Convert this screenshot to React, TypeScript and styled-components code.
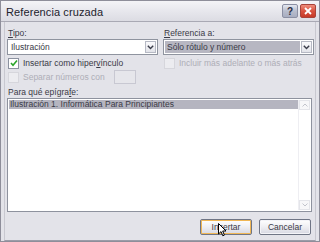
import React from "react";
import styled, { createGlobalStyle } from "styled-components";

const Global = createGlobalStyle`
  html, body { margin: 0; padding: 0; background: #e4e4ea; }
  body { font-family: "Liberation Sans", Arial, sans-serif; }
`;

const Window = styled.div`
  width: 320px;
  height: 242px;
  box-sizing: border-box;
  border: 1px solid #8e8e9a;
  background: #e3e3e9;
  display: flex;
  flex-direction: column;
  overflow: hidden;
  position: relative;
`;

const TitleBar = styled.div`
  height: 20px;
  flex: none;
  display: flex;
  align-items: center;
  padding: 0 3px 0 5px;
  background: linear-gradient(#f4f4f7, #e6e6ec 55%, #dcdce3);
  border-bottom: 1px solid #a9a9b4;
`;

const Title = styled.div`
  flex: 1;
  font-size: 11px;
  color: #22222c;
  letter-spacing: 0.1px;
  padding-top: 1px;
`;

const TitleButton = styled.div<{ $close?: boolean }>`
  width: 14px;
  height: 12px;
  margin-left: 2px;
  border-radius: 2px;
  border: 1px solid ${(p) => (p.$close ? "#a8433a" : "#8b8fa3")};
  background: ${(p) =>
    p.$close
      ? "linear-gradient(#ef8d7c, #d9523f 50%, #c63a28)"
      : "linear-gradient(#e4e7f0, #b8bdcd 50%, #a8adc0)"};
  display: flex;
  align-items: center;
  justify-content: center;
  color: ${(p) => (p.$close ? "#fff" : "#2a2c40")};
  font-size: 10px;
  font-weight: bold;
`;

const Frame = styled.div`
  flex: 1;
  margin: 0 3px 3px 3px;
  border-left: 1px solid #c8c8d0;
  border-right: 1px solid #c8c8d0;
  border-bottom: 1px solid #9c9ca8;
  padding: 6px 3px 5px 2px;
  display: flex;
  flex-direction: column;
`;

const Columns = styled.div`
  display: grid;
  grid-template-columns: 151px 151px;
  column-gap: 5px;
`;

const Col = styled.div`
  display: flex;
  flex-direction: column;
`;

const Label = styled.div<{ $disabled?: boolean }>`
  font-size: 8.5px;
  line-height: 10px;
  color: ${(p) => (p.$disabled ? "#aeaeb7" : "#3a3a46")};
  white-space: nowrap;
  padding-left: 1px;
`;

const Combo = styled.div`
  margin-top: 1px;
  height: 16px;
  box-sizing: border-box;
  border: 1px solid #8f949f;
  background: #fff;
  display: flex;
  align-items: stretch;
  padding: 1px;
`;

const ComboText = styled.div<{ $selected?: boolean }>`
  flex: 1;
  font-size: 8.5px;
  line-height: 12px;
  padding-left: 2px;
  color: #3a3a46;
  background: ${(p) => (p.$selected ? "#b7b7c2" : "transparent")};
  margin-right: 1px;
`;

const ComboButton = styled.div`
  width: 11px;
  box-sizing: border-box;
  border: 1px solid #b6b9c4;
  background: linear-gradient(#fafafc, #e2e3e9);
  display: flex;
  align-items: center;
  justify-content: center;
`;

const CheckRow = styled.div<{ $top: number }>`
  display: flex;
  align-items: center;
  margin-top: ${(p) => p.$top}px;
  height: 12px;
`;

const Box = styled.div<{ $disabled?: boolean }>`
  width: 9px;
  height: 9px;
  margin-left: 1px;
  margin-right: 3px;
  border: 1px solid ${(p) => (p.$disabled ? "#d6d6dc" : "#8c92a0")};
  background: ${(p) => (p.$disabled ? "#ececf0" : "#fff")};
  display: flex;
  align-items: center;
  justify-content: center;
`;

const SmallInput = styled.div`
  width: 20px;
  height: 12px;
  margin-left: 9px;
  border: 1px solid #c8c8d2;
  background: #e6e6eb;
`;

const ListLabel = styled(Label)`
  margin-top: 4px;
`;

const ListBox = styled.div`
  margin-top: 1px;
  height: 114px;
  box-sizing: border-box;
  border: 1px solid #8e929e;
  background: #fff;
  display: flex;
  padding: 1px;
`;

const Items = styled.div`
  flex: 1;
`;

const Item = styled.div<{ $selected?: boolean }>`
  font-size: 8.5px;
  line-height: 9px;
  padding-left: 1px;
  color: #3a3a46;
  background: ${(p) => (p.$selected ? "#b5b5c0" : "transparent")};
`;

const ScrollBar = styled.div`
  width: 11px;
  border-left: 1px solid #eeeef2;
  display: flex;
  flex-direction: column;
  justify-content: space-between;
`;

const ScrollArrow = styled.div`
  height: 10px;
  box-sizing: border-box;
  border: 1px solid #e4e5ea;
  background: #f7f7f9;
  display: flex;
  align-items: center;
  justify-content: center;
`;

const Buttons = styled.div`
  display: flex;
  justify-content: flex-end;
  gap: 7px;
  margin-top: 7px;
  padding-right: 1px;
`;

const Button = styled.div<{ $default?: boolean }>`
  width: 52px;
  height: 16px;
  box-sizing: border-box;
  border: 1px solid #6f7585;
  border-radius: 2px;
  background: linear-gradient(#ffffff, #eeeef2 50%, #d7d8e2);
  box-shadow: ${(p) =>
    p.$default ? "inset 0 0 0 1px #f0b755" : "inset 0 0 0 1px #f4f4f8"};
  display: flex;
  align-items: center;
  justify-content: center;
  font-size: 8.5px;
  color: #3a3a46;
  position: relative;
`;

const Cursor = styled.svg`
  position: absolute;
  left: 17px;
  top: 3px;
`;

const Chevron = () => (
  <svg width="7" height="5" viewBox="0 0 7 5">
    <path d="M0.8 0.8 L3.5 3.6 L6.2 0.8" fill="none" stroke="#3a3d4a" strokeWidth="1.4" />
  </svg>
);

const Arrow = ({ up }: { up?: boolean }) => (
  <svg width="6" height="4" viewBox="0 0 6 4">
    <path
      d={up ? "M0.5 3.5 L3 1 L5.5 3.5" : "M0.5 0.5 L3 3 L5.5 0.5"}
      fill="none"
      stroke="#c2c4cc"
      strokeWidth="1"
    />
  </svg>
);

export default function App() {
  return (
    <>
      <Global />
      <Window>
        <TitleBar>
          <Title>Referencia cruzada</Title>
          <TitleButton>?</TitleButton>
          <TitleButton $close>
            <svg width="8" height="8" viewBox="0 0 8 8">
              <path d="M1 1 L7 7 M7 1 L1 7" stroke="#fff" strokeWidth="1.8" />
            </svg>
          </TitleButton>
        </TitleBar>
        <Frame>
          <Columns>
            <Col>
              <Label>
                <u>T</u>ipo:
              </Label>
              <Combo>
                <ComboText>Ilustración</ComboText>
                <ComboButton>
                  <Chevron />
                </ComboButton>
              </Combo>
              <CheckRow $top={2}>
                <Box>
                  <svg width="8" height="8" viewBox="0 0 8 8">
                    <path d="M1 4 L3 6.2 L7 1.5" fill="none" stroke="#2aa52a" strokeWidth="1.6" />
                  </svg>
                </Box>
                <Label>
                  Insertar como hiper<u>v</u>ínculo
                </Label>
              </CheckRow>
              <CheckRow $top={2}>
                <Box $disabled />
                <Label $disabled>Separar números con</Label>
                <SmallInput />
              </CheckRow>
            </Col>
            <Col>
              <Label>
                <u>R</u>eferencia a:
              </Label>
              <Combo>
                <ComboText $selected>Sólo rótulo y número</ComboText>
                <ComboButton>
                  <Chevron />
                </ComboButton>
              </Combo>
              <CheckRow $top={2}>
                <Box $disabled />
                <Label $disabled>Incluir más adelante o más atrás</Label>
              </CheckRow>
            </Col>
          </Columns>
          <ListLabel>
            Para qué epígra<u>f</u>e:
          </ListLabel>
          <ListBox>
            <Items>
              <Item $selected>Ilustración 1. Informática Para Principiantes</Item>
            </Items>
            <ScrollBar>
              <ScrollArrow>
                <Arrow up />
              </ScrollArrow>
              <ScrollArrow>
                <Arrow />
              </ScrollArrow>
            </ScrollBar>
          </ListBox>
          <Buttons>
            <Button $default>
              Insertar
              <Cursor width="9" height="14" viewBox="0 0 9 14">
                <path d="M0.5 0.5 L0.5 11 L3 8.6 L4.8 12.8 L6.4 12.1 L4.7 8 L8 8 Z" fill="#fff" stroke="#000" strokeWidth="1" />
              </Cursor>
            </Button>
            <Button>Cancelar</Button>
          </Buttons>
        </Frame>
      </Window>
    </>
  );
}
